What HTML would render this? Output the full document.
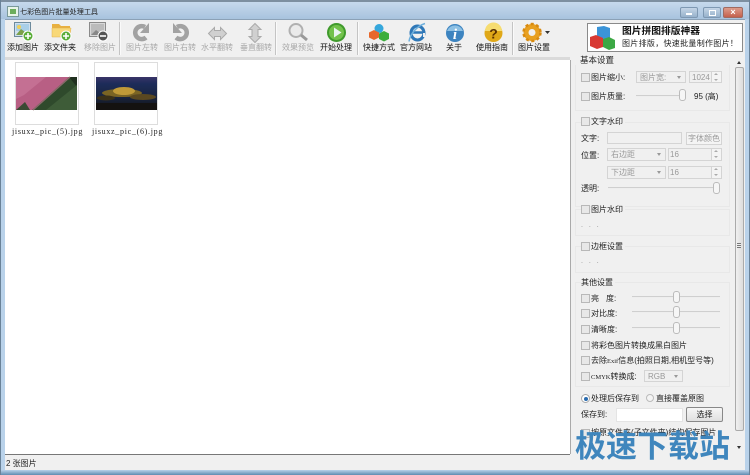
<!DOCTYPE html>
<html><head><meta charset="utf-8">
<style>
html,body{margin:0;padding:0}
body{width:750px;height:475px;overflow:hidden;position:relative;background:#b9d2ea;font-family:"Liberation Sans","Noto Sans CJK SC",sans-serif;font-size:8px;color:#222}
div,span{position:absolute;white-space:nowrap}
svg{position:absolute;overflow:visible}
.tb{top:42px;font-size:8px;line-height:12px;text-align:center;width:50px;color:#111}
.d{color:#a8a8a8}
.l{font-size:8px;line-height:12px;color:#222;margin-top:1px}
.cb{width:7px;height:7px;background:#e8e8e8;border:1px solid #b8b8b8}
.in{background:#f0f0f0;border:1px solid #d4d4d4;box-sizing:border-box;color:#999;font-size:8px;line-height:11px;padding-left:3px}
.tr{height:1px;background:#cfcfcf;border-bottom:1px solid #eee}
.th{width:5px;height:10px;background:#f6f6f6;border:1px solid #bbb;border-radius:3px}
.sep{width:1px;height:33px;top:22px;background:#c4c4c4;border-right:1px solid #fafafa}
.grp{left:575px;width:155px;border:1px solid #e8e8e8;box-sizing:border-box}
.ar{right:4px;top:4px;width:0;height:0;border-left:2.5px solid transparent;border-right:2.5px solid transparent;border-top:3px solid #999}
.sb{right:0;top:0;width:9px;height:11px;border-left:1px solid #d4d4d4;background:#f4f4f4}
.sb:before{content:"";position:absolute;left:2px;top:1px;border-left:2px solid transparent;border-right:2px solid transparent;border-bottom:2px solid #aaa}
.sb:after{content:"";position:absolute;left:2px;top:7px;border-left:2px solid transparent;border-right:2px solid transparent;border-top:2px solid #aaa}
.m{font-family:"Liberation Serif",serif;font-size:6.5px}
</style></head><body>
<div style="left:0;top:0;width:750px;height:2px;background:#7d8fa0"></div>
<div style="left:0;top:2px;width:750px;height:17px;background:linear-gradient(#c6d9ec,#a8c3de)"></div>
<svg style="left:7px;top:6px" width="12" height="11"><rect x=".5" y=".5" width="11" height="10" fill="#e8f4e8" stroke="#7a9a9a"/><rect x="3" y="3" width="6" height="5" fill="#6cae5c"/></svg>
<div style="left:20px;top:5px;font-size:7.1px;line-height:14px;color:#222">七彩色图片批量处理工具</div>
<div style="left:680px;top:7px;width:18px;height:11px;background:linear-gradient(#c5d5e6,#98b2cc);border:1px solid #7e98b2;border-radius:2px;box-sizing:border-box"><div style="left:5px;top:5px;width:6px;height:2px;background:#fff"></div></div>
<div style="left:703px;top:7px;width:18px;height:11px;background:linear-gradient(#c5d5e6,#98b2cc);border:1px solid #7e98b2;border-radius:2px;box-sizing:border-box"><div style="left:5px;top:2px;width:5px;height:4px;border:1px solid #fff"></div></div>
<div style="left:723px;top:7px;width:20px;height:11px;background:linear-gradient(#dc9c8c,#c4604c);border:1px solid #a06a60;border-radius:2px;box-sizing:border-box;color:#fff;font-size:9px;line-height:9px;text-align:center;font-weight:bold">×</div>

<div style="left:5px;top:19px;width:740px;height:451px;background:#f0f0f0"></div>
<div style="left:5px;top:19px;width:740px;height:1px;background:#8ba1b6"></div>
<div style="left:5px;top:57px;width:565px;height:3px;background:#dadada"></div>
<div style="left:5px;top:60px;width:565px;height:394px;background:#fff;border-bottom:1px solid #777"></div>
<div style="left:570px;top:60px;width:1px;height:394px;background:#aaa"></div>

<!-- toolbar icons -->
<svg style="left:14px;top:22px" width="20" height="20"><rect x=".5" y=".5" width="16" height="14" fill="#cfe0ee" stroke="#6d8a9c"/><rect x="2" y="2" width="13" height="7" fill="#a9cfe8"/><path d="M2 13l5-6 4 3 4-2v5z" fill="#7ba04a"/><circle cx="5" cy="5" r="2" fill="#f0d058"/><circle cx="14" cy="14" r="5" fill="#5aad38" stroke="#fff"/><path d="M11 14h6M14 11v6" stroke="#fff" stroke-width="1.6"/></svg>
<svg style="left:52px;top:23px" width="20" height="18"><path d="M0 1h7l2 2h9v11H0z" fill="#e8b040"/><path d="M0 5h19l-1 9H0z" fill="#f8d878" stroke="#e0b050" stroke-width=".5"/><circle cx="14" cy="13" r="5" fill="#5aad38" stroke="#fff"/><path d="M11 13h6M14 10v6" stroke="#fff" stroke-width="1.6"/></svg>
<svg style="left:89px;top:22px" width="20" height="20"><rect x=".5" y=".5" width="16" height="14" fill="#d8d8d8" stroke="#8a8a8a"/><rect x="2" y="2" width="13" height="11" fill="#bbb"/><path d="M2 13l5-5 4 3 4-2v4z" fill="#888"/><circle cx="14" cy="14" r="5" fill="#555" stroke="#fff"/><path d="M11 14h6" stroke="#fff" stroke-width="1.6"/></svg>
<svg style="left:133px;top:23px" width="18" height="19"><path d="M13 14.500A6.500 6.500 0 1 1 12 4" fill="none" stroke="#a2a2a2" stroke-width="4.500"/><path d="M16 0v10H7z" fill="#a2a2a2"/></svg>
<svg style="left:171px;top:23px" width="18" height="19"><path d="M5 14.500A6.500 6.500 0 1 0 6 4" fill="none" stroke="#a2a2a2" stroke-width="4.500"/><path d="M2 0v10h9z" fill="#a2a2a2"/></svg>
<svg style="left:208px;top:27px" width="19" height="13"><path d="M.5 6.500l6-6v3h6v-3l6 6-6 6v-3h-6v3z" fill="#d0d0d0" stroke="#aaa"/></svg>
<svg style="left:248px;top:23px" width="14" height="20"><path d="M7 .5l6 6h-3v7h3l-6 6-6-6h3v-7H1z" fill="#d0d0d0" stroke="#aaa"/></svg>
<svg style="left:288px;top:23px" width="20" height="18"><circle cx="8" cy="7.500" r="6.500" fill="#eaeaea" stroke="#b0b0b0" stroke-width="2"/><path d="M13 12l6 5" stroke="#999" stroke-width="3"/></svg>
<svg style="left:327px;top:23px" width="19" height="19"><circle cx="9.500" cy="9.500" r="9.500" fill="#3f9a2c"/><circle cx="9.500" cy="9.500" r="7.500" fill="#72c24c"/><path d="M7 4.500l7.500 5-7.500 5z" fill="#e8f4f0"/></svg>
<svg style="left:368px;top:24px" width="22" height="18"><circle cx="11" cy="4.500" r="4.500" fill="#35a7dc"/><path d="M6 6l5 2.500v5L6 16l-5-2.500v-5z" fill="#e8682c"/><path d="M16 7l5 2.500v5.500l-5 2.500-5-2.500V9.500z" fill="#3bae3c"/></svg>
<svg style="left:408px;top:23px" width="18" height="19"><ellipse cx="9.500" cy="10" rx="6.500" ry="7" fill="none" stroke="#2f78b8" stroke-width="3"/><path d="M4 9.500h11" stroke="#2f78b8" stroke-width="2.500"/><path d="M15 12l2 0" stroke="#f0f0f0" stroke-width="4"/><path d="M1 18.500C2 11 9 3 17 .5" fill="none" stroke="#6fb0dc" stroke-width="1.500"/></svg>
<svg style="left:446px;top:24px" width="18" height="18"><circle cx="9" cy="9" r="9" fill="#3d84c0"/><path d="M1 7a8.500 8.500 0 0 1 16 0z" fill="#8cc0e4"/><text x="9" y="15" font-family="Liberation Serif" font-weight="bold" font-style="italic" font-size="15" fill="#fff" text-anchor="middle">i</text></svg>
<svg style="left:484px;top:24px" width="19" height="18"><circle cx="9.500" cy="9" r="9" fill="#e0a818"/><path d="M1 7a8.500 8.500 0 0 1 17 0z" fill="#f6dc70"/><text x="9.500" y="14.500" font-family="Liberation Sans" font-weight="bold" font-size="14" fill="#5a3000" text-anchor="middle">?</text></svg>
<svg style="left:522px;top:23px" width="28" height="19"><circle cx="10" cy="9.500" r="6" fill="none" stroke="#e8a020" stroke-width="5"/><circle cx="10" cy="9.500" r="8.500" fill="none" stroke="#d88a10" stroke-width="2.500" stroke-dasharray="3 2.500"/><path d="M23 8h5l-2.500 3z" fill="#333"/></svg>

<div class="sep" style="left:119px"></div><div class="sep" style="left:275px"></div><div class="sep" style="left:357px"></div><div class="sep" style="left:512px"></div>

<div class="tb" style="left:-2px">添加图片</div>
<div class="tb" style="left:35px">添文件夹</div>
<div class="tb d" style="left:75px">移除图片</div>
<div class="tb d" style="left:117px">图片左转</div>
<div class="tb d" style="left:155px">图片右转</div>
<div class="tb d" style="left:192px">水平翻转</div>
<div class="tb d" style="left:231px">垂直翻转</div>
<div class="tb d" style="left:273px">效果预览</div>
<div class="tb" style="left:311px">开始处理</div>
<div class="tb" style="left:354px">快捷方式</div>
<div class="tb" style="left:391px">官方网站</div>
<div class="tb" style="left:429px">关于</div>
<div class="tb" style="left:467px">使用指南</div>
<div class="tb" style="left:509px">图片设置</div>

<!-- ad -->
<div style="left:587px;top:23px;width:156px;height:29px;background:#fff;border:1px solid #8a8a8a;box-sizing:border-box"></div>
<svg style="left:590px;top:26px" width="26" height="24"><path d="M7 1l7-1 6 2v10l-7 2-6-2z" fill="#3b94d8"/><path d="M0 11l6-2 7 3v9l-6 2-7-3z" fill="#d83a34"/><path d="M13 13l6-2 6 3v8l-6 2-6-3z" fill="#3ca844"/></svg>
<div style="left:622px;top:25px;font-size:9.750px;line-height:13px;font-weight:bold;color:#111">图片拼图排版神器</div>
<div style="left:622px;top:38px;font-size:8px;line-height:12px;color:#222;letter-spacing:.3px">图片排版，快速批量制作图片！</div>

<!-- thumbs -->
<div style="left:15px;top:62px;width:62px;height:61px;border:1px solid #ddd;background:#fff"></div>
<svg style="left:16px;top:77px" width="61" height="33"><rect width="61" height="33" fill="#2f4a2c"/><path d="M0 0h53L16 33H0z" fill="#b85f84"/><path d="M0 33l9-8 5 8z" fill="#3b4a34"/><path d="M0 0h30L8 18 0 22z" fill="#c47093"/><path d="M53 0h8v10z" fill="#20301f"/><path d="M54 0L17 33" stroke="#8a6a6a" stroke-width="1.500"/><path d="M30 33L61 8v25z" fill="#3e5c38"/></svg>
<div style="left:94px;top:62px;width:62px;height:61px;border:1px solid #ddd;background:#fff"></div>
<svg style="left:96px;top:77px" width="61" height="33"><defs><linearGradient id="g" x1="0" y1="0" x2="0" y2="1"><stop offset="0" stop-color="#3a3468"/><stop offset=".2" stop-color="#1d2c5a"/><stop offset=".6" stop-color="#182440"/><stop offset="1" stop-color="#141210"/></linearGradient></defs><rect width="61" height="33" fill="url(#g)"/><ellipse cx="26" cy="16" rx="20" ry="4" fill="#7a6424"/><ellipse cx="28" cy="14" rx="11" ry="4" fill="#c09a38"/><ellipse cx="47" cy="20" rx="13" ry="3" fill="#5a4820"/><ellipse cx="10" cy="21" rx="9" ry="2.500" fill="#3a3018"/><path d="M0 26h61v7H0z" fill="#141210"/></svg>
<div style="left:12px;top:126px;font-family:'Liberation Serif','Noto Sans CJK SC',serif;font-size:8px;line-height:11px;color:#222;letter-spacing:.7px">jisuxz_pic_(5).jpg</div>
<div style="left:92px;top:126px;font-family:'Liberation Serif','Noto Sans CJK SC',serif;font-size:8px;line-height:11px;color:#222;letter-spacing:.7px">jisuxz_pic_(6).jpg</div>

<!-- right panel -->
<div class="grp" style="top:65px;height:46px;border-top:0"></div>
<div class="l" style="left:580px;top:53px;background:#f0f0f0;padding-right:2px;font-size:8.500px">基本设置</div>
<div class="cb" style="left:581px;top:73px"></div><div class="l" style="left:591px;top:71px">图片缩小:</div>
<div class="in" style="left:636px;top:71px;width:50px;height:12px">图片宽:<span class="ar"></span></div>
<div class="in" style="left:689px;top:71px;width:33px;height:12px;padding-left:2px">1024<span class="sb" style="height:10px"></span></div>
<div class="cb" style="left:581px;top:92px"></div><div class="l" style="left:591px;top:90px">图片质量:</div>
<div class="tr" style="left:636px;top:95px;width:46px"></div><div class="th" style="left:679px;top:89px"></div>
<div class="l" style="left:694px;top:90px;font-size:8px">95 (高)</div>

<div class="grp" style="top:122px;height:85px"></div>
<div class="cb" style="left:581px;top:117px"></div><div class="l" style="left:591px;top:115px;background:#f0f0f0;padding-right:2px">文字水印</div>
<div class="l" style="left:581px;top:132px">文字:</div>
<div class="in" style="left:607px;top:132px;width:75px;height:12px"></div>
<div class="in" style="left:686px;top:132px;width:36px;height:13px;background:#f4f4f4;padding:0;text-align:center;font-size:8px">字体颜色</div>
<div class="l" style="left:581px;top:149px">位置:</div>
<div class="in" style="left:607px;top:148px;width:59px;height:13px">右边距<span class="ar"></span></div>
<div class="in" style="left:668px;top:148px;width:54px;height:13px;padding-left:1px">16<span class="sb"></span></div>
<div class="in" style="left:607px;top:166px;width:59px;height:13px">下边距<span class="ar"></span></div>
<div class="in" style="left:668px;top:166px;width:54px;height:13px;padding-left:1px">16<span class="sb"></span></div>
<div class="l" style="left:581px;top:182px">透明:</div>
<div class="tr" style="left:608px;top:187px;width:108px"></div><div class="th" style="left:713px;top:182px"></div>

<div class="grp" style="top:209px;height:27px"></div>
<div class="cb" style="left:581px;top:205px"></div><div class="l" style="left:591px;top:203px;background:#f0f0f0;padding-right:2px">图片水印</div>
<div class="l" style="left:581px;top:219px;color:#888;letter-spacing:2px;font-size:7px">. . .</div>
<div class="grp" style="top:246px;height:27px"></div>
<div class="cb" style="left:581px;top:242px"></div><div class="l" style="left:591px;top:240px;background:#f0f0f0;padding-right:2px">边框设置</div>
<div class="l" style="left:581px;top:255px;color:#888;letter-spacing:2px;font-size:7px">. . .</div>

<div class="grp" style="top:282px;height:105px"></div>
<div class="l" style="left:581px;top:276px;background:#f0f0f0;padding-right:2px">其他设置</div>
<div class="cb" style="left:581px;top:294px"></div><div class="l" style="left:591px;top:292px">亮</div><div class="l" style="left:606px;top:292px">度:</div>
<div class="tr" style="left:632px;top:296px;width:88px"></div><div class="th" style="left:673px;top:291px"></div>
<div class="cb" style="left:581px;top:309px"></div><div class="l" style="left:591px;top:307px">对比度:</div>
<div class="tr" style="left:632px;top:311px;width:88px"></div><div class="th" style="left:673px;top:306px"></div>
<div class="cb" style="left:581px;top:325px"></div><div class="l" style="left:591px;top:323px">清晰度:</div>
<div class="tr" style="left:632px;top:327px;width:88px"></div><div class="th" style="left:673px;top:322px"></div>
<div class="cb" style="left:581px;top:341px"></div><div class="l" style="left:591px;top:339px">将彩色图片转换成黑白图片</div>
<div class="cb" style="left:581px;top:356px"></div><div class="l" style="left:591px;top:354px">去除<span class="m" style="position:static">Exif</span>信息(拍照日期,相机型号等)</div>
<div class="cb" style="left:581px;top:372px"></div><div class="l" style="left:591px;top:370px"><span class="m" style="position:static">CMYK</span>转换成:</div>
<div class="in" style="left:644px;top:370px;width:39px;height:12px">RGB<span class="ar"></span></div>

<div style="left:581px;top:394px;width:7px;height:7px;border-radius:50%;background:#fff;border:1px solid #aaa"><div style="left:1.500px;top:1.500px;width:4px;height:4px;border-radius:50%;background:#2a6cb0"></div></div>
<div class="l" style="left:591px;top:392px">处理后保存到</div>
<div style="left:646px;top:394px;width:6px;height:6px;border-radius:50%;background:#f4f4f4;border:1px solid #bbb"></div>
<div class="l" style="left:656px;top:392px">直接覆盖原图</div>
<div class="l" style="left:581px;top:408px">保存到:</div>
<div style="left:616px;top:408px;width:65px;height:12px;background:#fff;border:1px solid #e4e4e4"></div>
<div style="left:686px;top:407px;width:35px;height:13px;background:linear-gradient(#f6f6f6,#e0e0e0);border:1px solid #888;border-radius:2px;text-align:center;line-height:13px;font-size:8px;color:#222">选择</div>
<div class="cb" style="left:581px;top:429px"></div><div class="l" style="left:591px;top:426px">按原文件夹(子文件夹)结构保存图片</div>

<!-- scrollbar -->
<div style="left:737px;top:61px;width:0;height:0;border-left:2.500px solid transparent;border-right:2.500px solid transparent;border-bottom:3px solid #333"></div>
<div style="left:737px;top:446px;width:0;height:0;border-left:2.500px solid transparent;border-right:2.500px solid transparent;border-top:3px solid #333"></div>
<div style="left:735px;top:67px;width:7px;height:362px;background:linear-gradient(90deg,#f0f0f0,#dcdcdc);border:1px solid #aaa;border-radius:2px"></div>
<div style="left:737px;top:243px;width:4px;height:5px;background:repeating-linear-gradient(#777 0 1px,#eee 1px 2px)"></div>

<!-- status -->
<div style="left:5px;top:455px;width:740px;height:15px;background:#f0f0f0"></div>
<div class="l" style="left:6px;top:457px;font-size:8px">2 张图片</div>
<div style="left:0;top:470px;width:750px;height:5px;background:linear-gradient(#b9d2ea,#5f8cb0)"></div>
<div style="left:0;top:0;width:1px;height:475px;background:#6a8298"></div>
<div style="left:749px;top:0;width:1px;height:475px;background:#6a8298"></div>

<!-- watermark -->
<div style="left:575px;top:424px;font-size:31px;line-height:40px;font-weight:bold;color:#3f86bd;font-family:'Noto Sans CJK SC',sans-serif">极速下载站</div>
</body></html>
